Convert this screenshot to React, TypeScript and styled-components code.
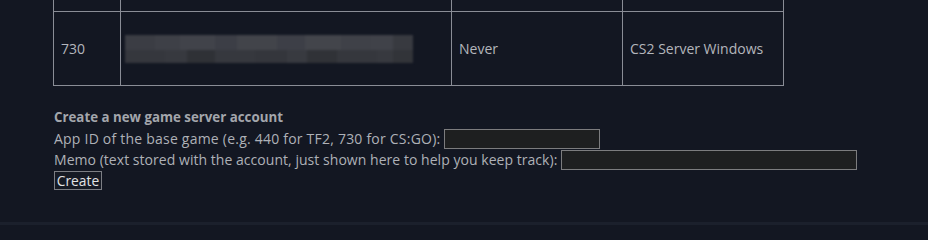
import React from "react";
import styled, { createGlobalStyle } from "styled-components";

const Global = createGlobalStyle`
  html, body { margin: 0; padding: 0; background: #131722; }
  body { font-family: "Open Sans", "Noto Sans", Arial, sans-serif; font-size: 14px; color: #aeb1b7; }
  #root { height: 225px; overflow: hidden; }
`;

const Page = styled.div`
  height: 225px;
  display: flex;
  flex-direction: column;
  padding-left: 53px;
  box-sizing: border-box;
`;

const Table = styled.table`
  border-collapse: collapse;
  width: 730px;
  margin-top: -29px;
  table-layout: fixed;
`;

const Cell = styled.td<{ $w?: number }>`
  border: 1px solid #8a8d96;
  padding: 0 7px;
  height: 74px;
  width: ${(p) => (p.$w ? `${p.$w}px` : "auto")};
  box-sizing: border-box;
  color: #b3b6bc;
  font-size: 14px;
  vertical-align: middle;
`;

const PrevCell = styled(Cell)`
  height: 40px;
`;

const BlurCell = styled(Cell)`
  padding-left: 4px;
`;

const Redacted = styled.div`
  width: 288px;
  height: 28px;
  margin-top: 1px;
  display: grid;
  grid-template-rows: 15px 13px;
  filter: blur(1.2px);
  overflow: hidden;
`;

const BlockRow = styled.div`
  display: flex;
`;

const Block = styled.div<{ $w: number; $c: string }>`
  width: ${(p) => p.$w}px;
  background: ${(p) => p.$c};
`;

const Form = styled.div`
  margin-top: 21px;
  display: flex;
  flex-direction: column;
`;

const Heading = styled.div`
  font-weight: 700;
  font-size: 13.3px;
  color: #a3a6ac;
  height: 21px;
  line-height: 21px;
  padding-left: 1px;
`;

const Line = styled.div<{ $tracking?: number }>`
  display: flex;
  align-items: center;
  height: 21px;
  padding-left: 1px;
  white-space: nowrap;
  letter-spacing: ${(p) => p.$tracking ?? 0}px;
`;

const Input = styled.input<{ $w: number }>`
  width: ${(p) => p.$w}px;
  height: 20px;
  box-sizing: border-box;
  margin: 1px 0 0 4px;
  padding: 0 3px;
  background: #1e1f20;
  border: 1px solid #7c7c7e;
  color: #ddd;
  font: inherit;
  letter-spacing: 0;
  outline: none;
`;

const ButtonRow = styled.div`
  display: flex;
  align-items: center;
  height: 21px;
  padding-left: 1px;
`;

const Button = styled.button`
  height: 19px;
  width: 48px;
  box-sizing: border-box;
  padding: 0;
  background: #161a24;
  border: 1px solid #7c7e84;
  color: #e2e3e5;
  font-family: "Open Sans", "Noto Sans", Arial, sans-serif;
  font-size: 13.8px;
  line-height: 17px;
`;

const Footer = styled.div`
  margin-top: auto;
  margin-left: -53px;
  height: 3px;
  background: #1b202c;
`;

const topBlocks: [number, string][] = [
  [30, "#3b3d44"], [25, "#3e4047"], [35, "#41434a"], [22, "#3c3e46"], [40, "#42444a"],
  [28, "#3d3f47"], [36, "#43454b"], [30, "#3f4148"], [22, "#404249"], [20, "#383a40"],
];
const bottomBlocks: [number, string][] = [
  [40, "#35373d"], [22, "#37393f"], [28, "#2f3136"], [40, "#36383e"], [32, "#34363c"],
  [20, "#383a40"], [30, "#303237"], [40, "#35373d"], [16, "#37393f"], [20, "#323439"],
];

export default function App() {
  return (
    <>
      <Global />
      <Page>
        <Table>
          <tbody>
            <tr>
              <PrevCell $w={67} />
              <PrevCell $w={331} />
              <PrevCell $w={171} />
              <PrevCell $w={161} />
            </tr>
            <tr>
              <Cell $w={67}>730</Cell>
              <BlurCell $w={331}>
                <Redacted>
                  <BlockRow>
                    {topBlocks.map(([w, c], i) => (
                      <Block key={i} $w={w} $c={c} />
                    ))}
                  </BlockRow>
                  <BlockRow>
                    {bottomBlocks.map(([w, c], i) => (
                      <Block key={i} $w={w} $c={c} />
                    ))}
                  </BlockRow>
                </Redacted>
              </BlurCell>
              <Cell $w={171}>Never</Cell>
              <Cell $w={161}>CS2 Server Windows</Cell>
            </tr>
          </tbody>
        </Table>
        <Form>
          <Heading>Create a new game server account</Heading>
          <Line $tracking={0.22}>
            App ID of the base game (e.g. 440 for TF2, 730 for CS:GO):
            <Input $w={156} />
          </Line>
          <Line $tracking={0.04}>
            Memo (text stored with the account, just shown here to help you keep track):
            <Input $w={296} />
          </Line>
          <ButtonRow>
            <Button>Create</Button>
          </ButtonRow>
        </Form>
        <Footer />
      </Page>
    </>
  );
}
